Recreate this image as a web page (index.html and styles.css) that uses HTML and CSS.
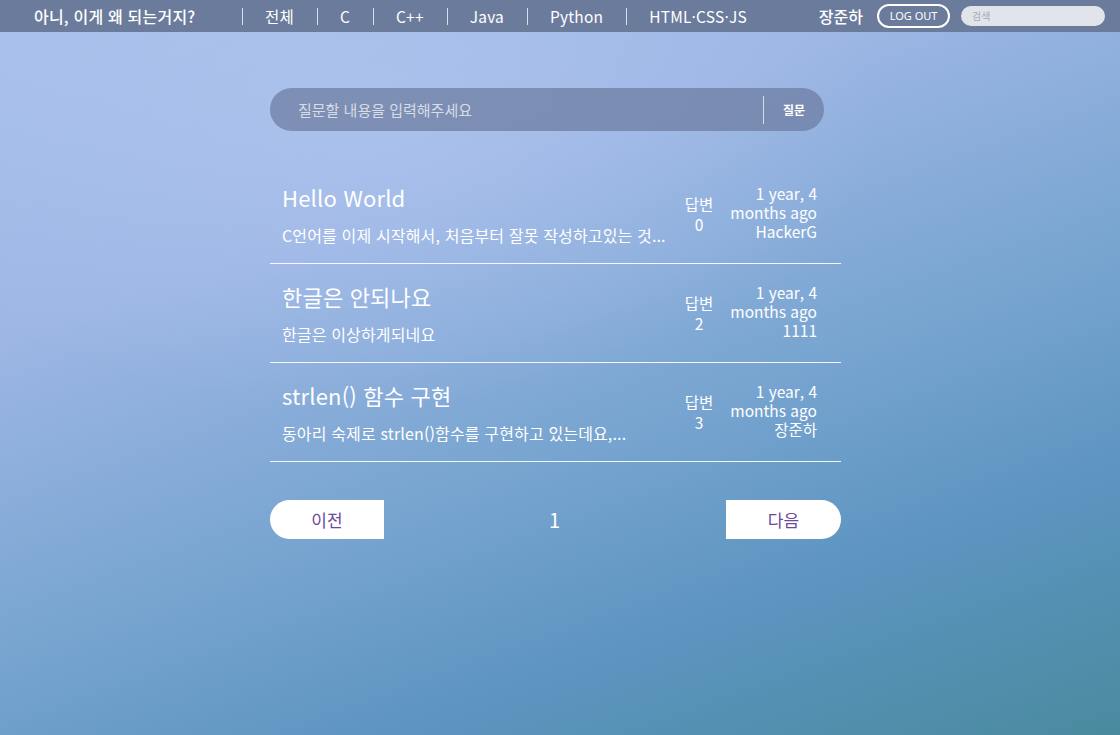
FILE: index.html
```html
<!DOCTYPE html>
<html lang="ko">
<head>
<meta charset="utf-8">
<title>아니, 이게 왜 되는거지?</title>
<link rel="stylesheet" href="styles.css">
</head>
<body>
<header class="topbar">
  <div class="brand">아니, 이게 왜 되는거지?</div>
  <nav class="nav">
    <span class="sep"></span><a class="nav-item">전체</a>
    <span class="sep"></span><a class="nav-item">C</a>
    <span class="sep"></span><a class="nav-item">C++</a>
    <span class="sep"></span><a class="nav-item">Java</a>
    <span class="sep"></span><a class="nav-item">Python</a>
    <span class="sep"></span><a class="nav-item">HTML·CSS·JS</a>
  </nav>
  <div class="user">
    <span class="username">장준하</span>
    <button class="logout">LOG OUT</button>
    <div class="search">검색</div>
  </div>
</header>

<main class="content">
  <div class="ask">
    <span class="ask-placeholder">질문할 내용을 입력해주세요</span>
    <span class="ask-divider"></span>
    <span class="ask-btn">질문</span>
  </div>

  <ul class="list">
    <li class="row">
      <div class="row-main">
        <div class="row-title">Hello World</div>
        <div class="row-desc">C언어를 이제 시작해서, 처음부터 잘못 작성하고있는 것...</div>
      </div>
      <div class="row-answers"><span>답변</span><span>0</span></div>
      <div class="row-meta"><span>1 year, 4</span><span>months ago</span><span>HackerG</span></div>
    </li>
    <li class="row">
      <div class="row-main">
        <div class="row-title">한글은 안되나요</div>
        <div class="row-desc">한글은 이상하게되네요</div>
      </div>
      <div class="row-answers"><span>답변</span><span>2</span></div>
      <div class="row-meta"><span>1 year, 4</span><span>months ago</span><span>1111</span></div>
    </li>
    <li class="row">
      <div class="row-main">
        <div class="row-title">strlen() 함수 구현</div>
        <div class="row-desc">동아리 숙제로 strlen()함수를 구현하고 있는데요,...</div>
      </div>
      <div class="row-answers"><span>답변</span><span>3</span></div>
      <div class="row-meta"><span>1 year, 4</span><span>months ago</span><span>장준하</span></div>
    </li>
  </ul>

  <div class="pager">
    <button class="page-btn prev">이전</button>
    <span class="page-num">1</span>
    <button class="page-btn next">다음</button>
  </div>
</main>
</body>
</html>
```

FILE: styles.css
```css
* { box-sizing: border-box; }
html, body { height: 100%; }
body {
  margin: 0;
  min-height: 735px;
  font-family: "Noto Sans CJK KR", "Noto Sans", sans-serif;
  color: #fff;
  background:
    radial-gradient(ellipse 520px 300px at 360px 110px, rgba(180,200,242,0.55), rgba(180,200,242,0) 100%),
    linear-gradient(160deg, #a7c0ea 0%, #9db6e4 30%, #7ba6d2 55%, #5b94bf 78%, #4a8a9e 100%);
  overflow: hidden;
}

.topbar {
  height: 32px;
  display: flex;
  align-items: center;
  background: #6b7b9b;
  padding-left: 34px;
  font-size: 15.5px;
  line-height: 32px;
}
.brand { width: 208px; font-size: 16px; font-weight: 500; letter-spacing: 0.2px; }
.nav { display: flex; align-items: center; }
.sep { width: 1px; height: 17px; background: rgba(255,255,255,0.75); }
.nav-item { padding: 0 23px 0 22px; color: #fff; letter-spacing: 0.2px; }
.nav-item:last-child { padding-right: 0; }
.user { display: flex; align-items: center; margin-left: 72px; }
.username { font-size: 16px; font-weight: 500; }
.logout {
  margin-left: 14px;
  height: 24px;
  width: 73px;
  border: 2px solid #fff;
  border-radius: 12px;
  background: transparent;
  color: #fff;
  font-family: "Noto Sans", sans-serif;
  font-size: 11px;
  line-height: 18px;
  padding: 0;
}
.search {
  margin-left: 11px;
  width: 144px;
  height: 20px;
  border-radius: 10px;
  background: #e1e4eb;
  color: #a6abb7;
  font-size: 10px;
  line-height: 20px;
  padding-left: 11px;
}

.content { width: 571px; margin-left: 270px; padding-top: 56px; }

.ask {
  width: 554px;
  height: 43px;
  border-radius: 22px;
  background: rgba(108,124,160,0.72);
  display: flex;
  align-items: center;
  padding-left: 28px;
}
.ask-placeholder { flex: 1; color: #d8dce6; font-size: 15px; }
.ask-divider { width: 1px; height: 28px; background: rgba(255,255,255,0.7); }
.ask-btn { width: 60px; text-align: center; font-size: 12px; font-weight: 700; }

.list { list-style: none; margin: 34px 0 0; padding: 0; }
.row {
  display: flex;
  align-items: center;
  height: 99px;
  border-bottom: 1px solid rgba(255,255,255,0.9);
  padding-left: 12px;
  padding-right: 24px;
}
.row-main { flex: 1; padding-top: 1px; }
.row-title { font-size: 22px; line-height: 26px; letter-spacing: 0.2px; }
.row-desc { font-size: 16px; line-height: 20px; margin-top: 15px; letter-spacing: 0.15px; }
.row-answers {
  width: 32px;
  display: flex;
  flex-direction: column;
  align-items: center;
  font-size: 15.5px;
  margin-right: 12px;
  gap: 1px;
}
.row-answers span { line-height: 19px; }
.row-meta {
  width: 90px;
  display: flex;
  flex-direction: column;
  align-items: flex-end;
  font-size: 15.5px;
  padding-bottom: 4px;
}
.row-meta span { line-height: 19px; white-space: nowrap; }

.pager {
  display: flex;
  align-items: center;
  justify-content: space-between;
  margin-top: 38px;
}
.page-btn {
  width: 115px;
  height: 39px;
  border: 0;
  background: #fff;
  color: #6b4a9a;
  font-family: "Noto Sans CJK KR", sans-serif;
  font-size: 17px;
  padding: 0;
}
.prev { border-radius: 20px 0 0 20px; width: 114px; }
.next { border-radius: 0 20px 20px 0; }
.page-num { font-size: 20px; margin-right: 1px; }
```
